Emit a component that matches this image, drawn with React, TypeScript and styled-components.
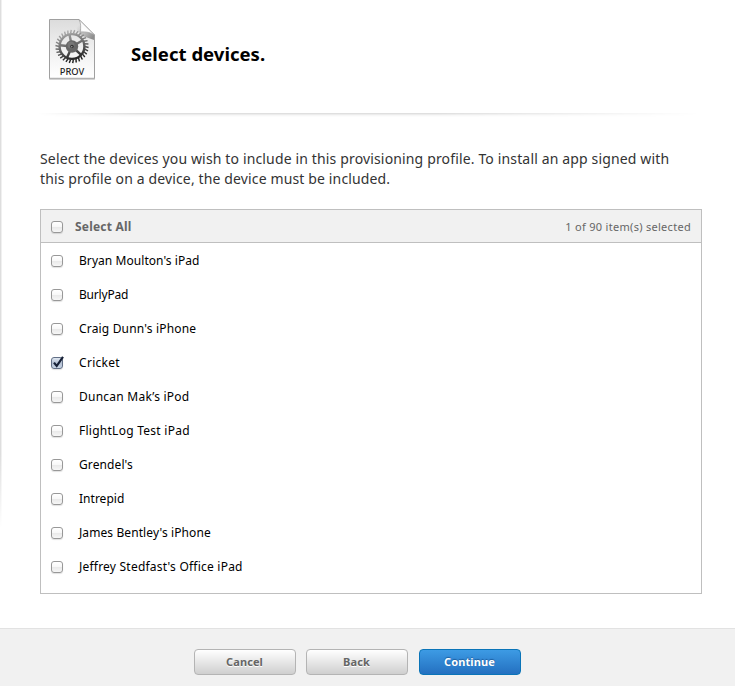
import React, { useState } from "react";
import styled, { createGlobalStyle, css } from "styled-components";

const GlobalStyle = createGlobalStyle`
  * { box-sizing: border-box; }
  body {
    margin: 0;
    background: #fff;
    color: #000;
    font-family: "Noto Sans", "Open Sans", sans-serif;
  }
`;

const Page = styled.main`
  position: relative;
  display: flex;
  flex-direction: column;
  height: 686px;
  overflow: hidden;
`;

const EdgeShadow = styled.div`
  position: absolute;
  left: 0;
  top: 0;
  width: 2px;
  height: 528px;
  background: linear-gradient(to right, #dedede 50%, #f0f0f0 50%);
  mask-image: linear-gradient(to bottom, #000 86%, transparent);
`;

const Header = styled.header`
  display: flex;
  align-items: flex-start;
  height: 113px;
  padding: 17px 0 0 47px;
`;

const Title = styled.h1`
  margin: 24px 0 0 34px;
  font-size: 18.5px;
  line-height: 26px;
  font-weight: 700;
  letter-spacing: 0.03px;
  white-space: nowrap;
`;

const Divider = styled.div`
  height: 4px;
  margin: 0 35px 0 38px;
  background: linear-gradient(to bottom, #dfdfdf 0 1px, #ececec 1px 2px, #f7f7f7 2px 3px, #fcfcfc 3px);
  mask-image: linear-gradient(to right, transparent, #000 15%, #000 60%, transparent);
`;

const Intro = styled.p`
  margin: 32px 0 0 40px;
  color: #333;
  font-size: 14px;
  line-height: 20px;
`;

const IntroLine = styled.span<{ $spacing: number }>`
  display: block;
  white-space: nowrap;
  letter-spacing: ${(p) => p.$spacing}px;
`;

const DeviceTable = styled.section`
  width: 662px;
  height: 385px;
  margin: 20px 0 0 40px;
  border: 1px solid #bfbfbf;
  flex: none;
`;

const TableHeader = styled.div`
  display: flex;
  align-items: center;
  height: 33px;
  padding: 1px 10px 0;
  background: #f1f1f1;
  border-bottom: 1px solid #bfbfbf;
  color: #666;
`;

const SelectAll = styled.span`
  margin-left: 12px;
  font-size: 12px;
  line-height: 16px;
  font-weight: 700;
  letter-spacing: 0.2px;
`;

const Count = styled.span`
  margin-left: auto;
  font-size: 11px;
  line-height: 16px;
  letter-spacing: 0.29px;
`;

const DeviceList = styled.ul`
  margin: 0;
  padding: 1px 0 0;
  list-style: none;
`;

const DeviceRow = styled.li`
  display: flex;
  align-items: center;
  height: 34px;
  padding-left: 10px;
`;

const DeviceName = styled.span<{ $spacing: number }>`
  margin-left: 16px;
  font-size: 12px;
  line-height: 16px;
  letter-spacing: ${(p) => p.$spacing}px;
  white-space: nowrap;
`;

const CheckButton = styled.button<{ $checked: boolean }>`
  position: relative;
  flex: none;
  width: 12px;
  height: 12px;
  padding: 0;
  border: 1px solid #989898;
  border-radius: 3px;
  background: linear-gradient(#fff 0, #f8f8f8 45%, #e9e9e9 50%, #f6f6f6);
  box-shadow: 0 1px 1px rgba(0, 0, 0, 0.12);
  ${(p) =>
    p.$checked &&
    css`
      border-color: #626f86;
      background: linear-gradient(#e0e8f2, #b3bfd2 50%, #c8d5e6);
    `}
`;

const Tick = styled.svg`
  position: absolute;
  left: -1px;
  top: -3px;
  width: 14px;
  height: 14px;
`;

const Footer = styled.footer`
  display: flex;
  align-items: flex-start;
  height: 58px;
  margin-top: auto;
  padding: 20px 0 0 194px;
  gap: 10px;
  background: #f1f1f1;
  border-top: 1px solid #e2e2e2;
`;

const ActionButton = styled.button<{ $primary?: boolean }>`
  width: 102px;
  height: 26px;
  padding: 0 1px 1px 0;
  border: 1px solid #b4b4b4;
  border-radius: 4px;
  background: linear-gradient(#fff, #cfcfcf);
  color: #666;
  font: 700 11px/22px "Noto Sans", sans-serif;
  letter-spacing: 0.1px;
  text-shadow: 0 1px 0 #fff;
  ${(p) =>
    p.$primary &&
    css`
      margin-left: 1px;
      border-color: #0a74b8;
      background: linear-gradient(#3d9be4, #2470c0);
      color: #fff;
      text-shadow: 0 -1px 1px rgba(0, 40, 90, 0.45);
    `}
`;

const IconArt = styled.svg`
  flex: none;
  width: 50px;
  height: 64px;
`;

const IconLabel = styled.text`
  font: 500 9.2px "Noto Sans", sans-serif;
  fill: #222;
`;

const TOOTH_COUNT = 30;
const teeth = Array.from({ length: TOOTH_COUNT }, (_, i) => (i * 360) / TOOTH_COUNT);
const spokes = [42, 114, 186, 258, 330];

function ProfileIcon() {
  return (
    <IconArt viewBox="0 0 50 64" aria-hidden="true">
      <defs>
        <linearGradient id="paper" x1="0" y1="0" x2="0" y2="1">
          <stop offset="0" stopColor="#dcdcdc" />
          <stop offset="0.5" stopColor="#f0f0f0" />
          <stop offset="1" stopColor="#fff" />
        </linearGradient>
        <linearGradient id="metal" gradientUnits="userSpaceOnUse" x1="20" y1="13" x2="29" y2="46">
          <stop offset="0" stopColor="#b0b0b0" />
          <stop offset="0.5" stopColor="#666" />
          <stop offset="1" stopColor="#101010" />
        </linearGradient>
        <linearGradient id="fold" x1="0" y1="1" x2="0.8" y2="0.2">
          <stop offset="0" stopColor="#d0d0d0" />
          <stop offset="0.35" stopColor="#fff" />
          <stop offset="1" stopColor="#f4f4f4" />
        </linearGradient>
        <linearGradient id="foldShade" x1="0" y1="0" x2="1" y2="0.8">
          <stop offset="0.3" stopColor="#777" stopOpacity="0" />
          <stop offset="1" stopColor="#666" stopOpacity="0.7" />
        </linearGradient>
      </defs>
      <path d="M2.5 3.5V62.3H47.5V19" fill="none" stroke="#000" strokeOpacity="0.22" />
      <path d="M2.5 2.5H32L47.5 18V61.3H2.5Z" fill="url(#paper)" stroke="#a0a0a0" />
      <path d="M25 3H32L47 18V23L33 18Z" fill="url(#foldShade)" />
      <g stroke="url(#metal)" fill="none">
        <circle cx="25" cy="29.5" r="12.4" strokeWidth="2.4" />
        {teeth.map((angle) => {
          const a = (angle * Math.PI) / 180;
          return (
            <path
              key={angle}
              strokeWidth="1.4"
              d={`M${25 + 13 * Math.cos(a)} ${29.5 + 13 * Math.sin(a)}L${25 + 16.6 * Math.cos(a + 0.06)} ${29.5 + 16.6 * Math.sin(a + 0.06)}`}
            />
          );
        })}
        {spokes.map((angle) => {
          const a = (angle * Math.PI) / 180;
          return (
            <path
              key={angle}
              strokeWidth="2.4"
              d={`M25 29.5L${25 + 12 * Math.cos(a)} ${29.5 + 12 * Math.sin(a)}`}
            />
          );
        })}
      </g>
      <circle cx="25" cy="29.5" r="6.2" fill="#666" />
      <circle cx="24" cy="28" r="3.5" fill="#777" />
      <circle cx="25" cy="29.5" r="1.8" fill="#333" />
      <circle cx="24.8" cy="29.8" r="0.7" fill="#aaa" />
      <path d="M32 2.5C34 6 34 11 33.2 15C39 14.5 44 15.5 47.5 18Z" fill="url(#fold)" stroke="#999" strokeWidth="0.7" />
      <IconLabel x="25" y="58" textAnchor="middle" textLength="24.5" lengthAdjust="spacingAndGlyphs">
        PROV
      </IconLabel>
    </IconArt>
  );
}

interface CheckboxProps {
  label: string;
  checked: boolean;
  onToggle: () => void;
}

function Checkbox({ label, checked, onToggle }: CheckboxProps) {
  return (
    <CheckButton role="checkbox" aria-checked={checked} aria-label={label} $checked={checked} onClick={onToggle}>
      {checked && (
        <Tick viewBox="0 0 14 14">
          <path d="M3 7.6L5.7 11L12 1.8" fill="none" stroke="#172137" strokeWidth="2.2" />
        </Tick>
      )}
    </CheckButton>
  );
}

const devices = [
  { name: "Bryan Moulton's iPad", spacing: 0.06 },
  { name: "BurlyPad", spacing: -0.2 },
  { name: "Craig Dunn's iPhone", spacing: 0.17 },
  { name: "Cricket", spacing: 0.3 },
  { name: "Duncan Mak’s iPod", spacing: 0.25 },
  { name: "FlightLog Test iPad", spacing: 0.26 },
  { name: "Grendel's", spacing: 0.1 },
  { name: "Intrepid", spacing: 0.02 },
  { name: "James Bentley's iPhone", spacing: 0.09 },
  { name: "Jeffrey Stedfast's Office iPad", spacing: 0.22 },
];

export default function App() {
  const [selected, setSelected] = useState<string[]>(["Cricket"]);
  const all = selected.length === devices.length;
  const toggle = (name: string) =>
    setSelected((s) => (s.includes(name) ? s.filter((n) => n !== name) : [...s, name]));

  return (
    <>
      <GlobalStyle />
      <Page>
        <EdgeShadow />
        <Header>
          <ProfileIcon />
          <Title>Select devices.</Title>
        </Header>
        <Divider />
        <Intro>
          <IntroLine $spacing={0.148}>
            Select the devices you wish to include in this provisioning profile. To install an app signed with
          </IntroLine>
          <IntroLine $spacing={0.135}>this profile on a device, the device must be included.</IntroLine>
        </Intro>
        <DeviceTable>
          <TableHeader>
            <Checkbox
              label="Select All"
              checked={all}
              onToggle={() => setSelected(all ? [] : devices.map((d) => d.name))}
            />
            <SelectAll>Select All</SelectAll>
            <Count>{selected.length} of 90 item(s) selected</Count>
          </TableHeader>
          <DeviceList>
            {devices.map((d) => (
              <DeviceRow key={d.name}>
                <Checkbox label={d.name} checked={selected.includes(d.name)} onToggle={() => toggle(d.name)} />
                <DeviceName $spacing={d.spacing}>{d.name}</DeviceName>
              </DeviceRow>
            ))}
          </DeviceList>
        </DeviceTable>
        <Footer>
          <ActionButton>Cancel</ActionButton>
          <ActionButton>Back</ActionButton>
          <ActionButton $primary>Continue</ActionButton>
        </Footer>
      </Page>
    </>
  );
}
